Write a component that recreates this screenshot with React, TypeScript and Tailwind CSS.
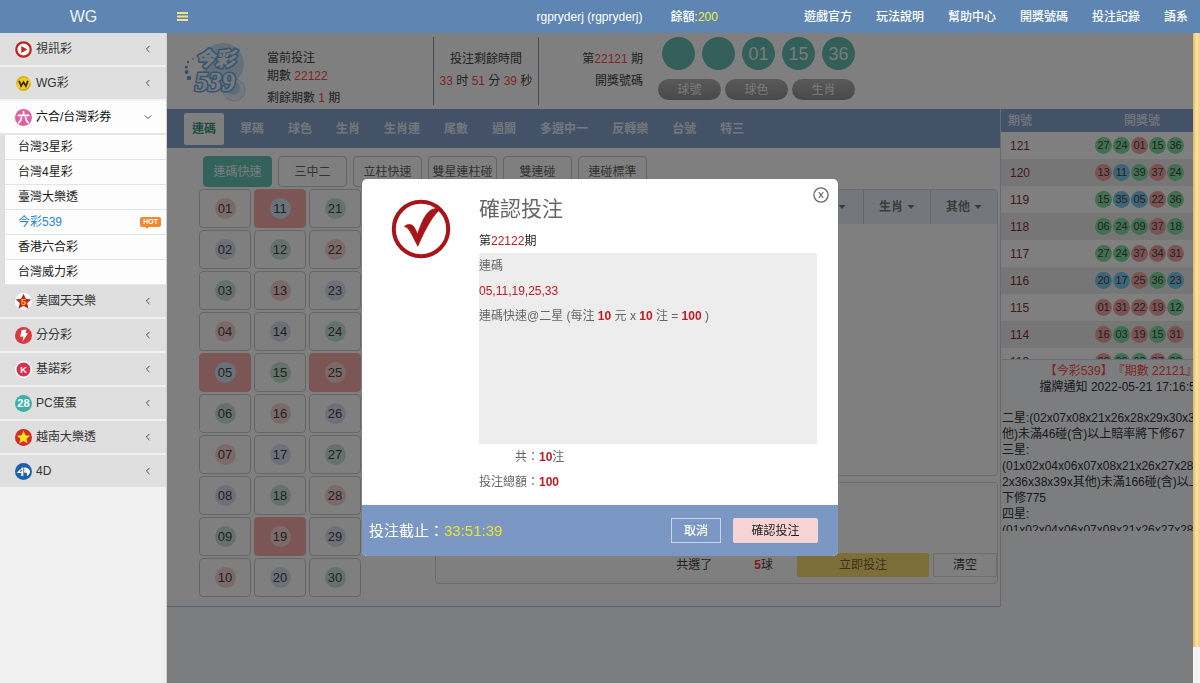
import React from "react";

type Tone = "red" | "blue" | "green";

const toneOf = (value: string): Tone => {
  const rest = Number(value) % 3;
  return rest === 1 ? "red" : rest === 2 ? "blue" : "green";
};

const pad = (n: number) => String(n).padStart(2, "0");

const topLinks = ["遊戲官方", "玩法說明", "幫助中心", "開獎號碼", "投注記錄", "語系"];
const playTabs = ["連碼", "單碼", "球色", "生肖", "生肖連", "尾數", "過關", "多選中一", "反轉樂", "台號", "特三"];
const modes = ["連碼快速", "三中二", "立柱快速", "雙星連柱碰", "雙連碰", "連碰標準"];
const picked = ["05", "11", "19", "25"];

const results: { id: string; balls: string[] }[] = [
  { id: "121", balls: ["27", "24", "01", "15", "36"] },
  { id: "120", balls: ["13", "11", "39", "37", "24"] },
  { id: "119", balls: ["15", "35", "05", "22", "36"] },
  { id: "118", balls: ["06", "24", "09", "37", "18"] },
  { id: "117", balls: ["27", "24", "37", "34", "31"] },
  { id: "116", balls: ["20", "17", "25", "36", "23"] },
  { id: "115", balls: ["01", "31", "22", "19", "12"] },
  { id: "114", balls: ["16", "03", "19", "15", "31"] },
  { id: "113", balls: ["22", "09", "03", "37", "33"] },
];

const notice = [
  "二星:(02x07x08x21x26x28x29x30x32",
  "他)未滿46碰(含)以上賠率將下修67",
  "三星:",
  "(01x02x04x06x07x08x21x26x27x28x",
  "2x36x38x39x其他)未滿166碰(含)以上",
  "下修775",
  "四星:",
  "(01x02x04x06x07x08x21x26x27x28x",
];

const svgText = "'Liberation Sans', sans-serif";
const starPoints = "10,2.2 12.3,7.4 17.8,7.9 13.6,11.6 14.9,17.1 10,14.2 5.1,17.1 6.4,11.6 2.2,7.9 7.7,7.4";

function Icon({ children }: { children: React.ReactNode }) {
  return (
    <svg viewBox="0 0 20 20" className="size-[17px] shrink-0" aria-hidden="true">
      {children}
    </svg>
  );
}

const VideoIcon = () => (
  <Icon>
    <circle cx="10" cy="10" r="8.5" fill="#fff" stroke="#c9201f" strokeWidth="2.6" />
    <path d="M7.4 5.8 L14.4 10 L7.4 14.2 Z" fill="#c9201f" />
  </Icon>
);
const WgIcon = () => (
  <Icon>
    <circle cx="10" cy="10" r="9" fill="#efcb30" />
    <circle cx="10" cy="10" r="7.6" fill="none" stroke="#a98a1c" strokeWidth="0.8" strokeDasharray="17 6" />
    <path d="M4.8 6.8 L7.2 13 L10 8.4 L12.8 13 L15.2 6.8" fill="none" stroke="#3a2d05" strokeWidth="2.1" />
  </Icon>
);
const SixIcon = () => (
  <Icon>
    <circle cx="10" cy="10" r="10" fill="#e0609f" />
    <path
      d="M10 3.2 V6.6 M4 7.6 H16 M7.6 9.8 C7.3 12.6 6.4 14.4 4.6 16 M12.4 9.8 C12.7 12.6 13.6 14.4 15.4 16"
      fill="none"
      stroke="#fff"
      strokeWidth="2.1"
      strokeLinecap="round"
    />
  </Icon>
);
const UsIcon = () => (
  <Icon>
    <circle cx="10" cy="10" r="10" fill="#fff" />
    <polygon points="10,0.8 12.8,6.9 19.2,7.5 14.4,11.9 15.8,18.4 10,15 4.2,18.4 5.6,11.9 0.8,7.5 7.2,6.9" fill="#cf1f22" />
    <text x="10" y="14.4" textAnchor="middle" fontSize="11.5" fontWeight="700" fill="#f6c51c" fontFamily={svgText}>5</text>
  </Icon>
);
const BoltIcon = () => (
  <Icon>
    <circle cx="10" cy="10" r="10" fill="#d83a41" />
    <path d="M8 3.4 L13.6 2.8 L12.2 7.2 L15.2 7.4 L8.8 17.4 L9.8 11.2 L6 11.4 Z" fill="#fff" />
  </Icon>
);
const KenoIcon = () => (
  <Icon>
    <circle cx="10" cy="10" r="10" fill="#fff" />
    <circle cx="10" cy="10" r="8.2" fill="#d93050" />
    <text x="10.2" y="14" textAnchor="middle" fontSize="11" fontWeight="700" fill="#fff" fontFamily={svgText}>K</text>
  </Icon>
);
const EggIcon = () => (
  <Icon>
    <circle cx="10" cy="10" r="10" fill="#3fb0a5" />
    <text x="10" y="14.4" textAnchor="middle" fontSize="13" fontWeight="700" fill="#fff" fontFamily={svgText}>28</text>
  </Icon>
);
const VietnamIcon = () => (
  <Icon>
    <circle cx="10" cy="10" r="10" fill="#d52b27" />
    <polygon points={starPoints} fill="#fbe416" />
  </Icon>
);
const FourDIcon = () => (
  <Icon>
    <circle cx="10" cy="10" r="10" fill="#1f5fb0" />
    <path d="M2.6 11 L9.8 4.4 V15.4 H7.4 V11.8 H2.6 Z" fill="#fff" />
    <path d="M10.8 5.4 C15 5.4 17.6 7.8 17.6 10.2 C17.6 12.8 15.6 14.6 14 15.2 V11.6 H10.8 Z" fill="#fff" />
    <path d="M5.4 9.9 L7.8 7.6 V9.9 Z" fill="#222" />
  </Icon>
);

function Chevron({ open }: { open?: boolean }) {
  return (
    <svg viewBox="0 0 10 10" className="size-2" aria-hidden="true">
      <path d={open ? "M1 3 L5 7 L9 3" : "M6.8 1.2 L3 5 L6.8 8.8"} fill="none" stroke="#444" strokeWidth="1.2" />
    </svg>
  );
}

function MenuItem({ icon, label, open }: { icon: React.ReactNode; label: string; open?: boolean }) {
  return (
    <button
      type="button"
      aria-expanded={!!open}
      className={`flex h-[34px] w-full items-center border-b-2 pl-[15px] pr-[14px] text-left ${
        open ? "border-[#e6e6e6] bg-[#fdfdfd] text-[#111]" : "border-[#f1f1f1] bg-[#dfdfdf] text-[#333]"
      }`}
    >
      {icon}
      <span className="ml-1 flex-1">{label}</span>
      <Chevron open={open} />
    </button>
  );
}

const subItems = ["台灣3星彩", "台灣4星彩", "臺灣大樂透", "今彩539", "香港六合彩", "台灣威力彩"];

function Sidebar() {
  return (
    <nav className="w-[167px] shrink-0 border-r border-[#cfd3d8] bg-[#f0f0f1]">
      <MenuItem icon={<VideoIcon />} label="視訊彩" />
      <MenuItem icon={<WgIcon />} label="WG彩" />
      <MenuItem icon={<SixIcon />} label="六合/台灣彩券" open />
      <ul className="border-l-[5px] border-[#dfdfdf] bg-[#fdfdfd]">
        {subItems.map((item) => (
          <li key={item} className="border-b border-[#e4e4e4]">
            <a
              href="#"
              className={`flex h-6 items-center justify-between pl-[13px] pr-[5px] ${
                item === "今彩539" ? "text-[#1c86e0]" : "text-[#222]"
              }`}
            >
              {item}
              {item === "今彩539" && (
                <span className="relative h-[10px] rounded-[2px] bg-[#f5872f] px-[3px] text-[7px] leading-[10px] font-bold text-white after:absolute after:-bottom-px after:left-[5px] after:size-1 after:rotate-45 after:bg-[#f5872f]">
                  HOT
                </span>
              )}
            </a>
          </li>
        ))}
      </ul>
      <MenuItem icon={<UsIcon />} label="美國天天樂" />
      <MenuItem icon={<BoltIcon />} label="分分彩" />
      <MenuItem icon={<KenoIcon />} label="基諾彩" />
      <MenuItem icon={<EggIcon />} label="PC蛋蛋" />
      <MenuItem icon={<VietnamIcon />} label="越南大樂透" />
      <MenuItem icon={<FourDIcon />} label="4D" />
    </nav>
  );
}

function Header() {
  return (
    <header className="flex h-[33px] items-center bg-[#5f86b3] text-white">
      <div className="w-[167px] text-center text-base text-[#eef3f9]">WG</div>
      <button type="button" aria-label="選單" className="ml-[10px]">
        <svg viewBox="0 0 11 9" className="h-[9px] w-[11px]" aria-hidden="true">
          <path d="M0 1 H11 M0 4.5 H11 M0 8 H11" stroke="#f3e281" strokeWidth="1.9" />
        </svg>
      </button>
      <div className="flex flex-1 items-center justify-end gap-6 pr-3 font-medium">
        <span className="mr-1">rgpryderj (rgpryderj)</span>
        <span className="mr-[62px]">
          餘額:<span className="text-[#eef13a]">200</span>
        </span>
        {topLinks.map((label) => (
          <a key={label} href="#">
            {label}
          </a>
        ))}
      </div>
    </header>
  );
}

function Logo() {
  const style = {
    fontFamily: "'Noto Sans CJK TC', sans-serif",
    fontWeight: 900,
    fontStyle: "italic",
    paintOrder: "stroke",
  } as const;
  return (
    <svg viewBox="0 0 62 62" className="size-[62px] shrink-0" role="img" aria-label="今彩539">
      <circle cx="39" cy="22" r="21" fill="#cbe1f4" />
      <circle cx="50" cy="48" r="11" fill="#eaf3fb" stroke="#c2dbf0" />
      <circle cx="49" cy="46" r="7" fill="#bcd9f2" />
      <circle cx="9" cy="17" r="0.9" fill="#d69ab0" />
      <circle cx="4" cy="20" r="1.2" fill="#6aa6dc" />
      <circle cx="2.4" cy="25" r="1.5" fill="#5f9fda" />
      <circle cx="2.6" cy="30" r="1.9" fill="#5f9fda" />
      <circle cx="5" cy="36" r="2.2" fill="#5f9fda" />
      <text x="31" y="24" textAnchor="middle" fontSize="20" fill="#eef4fb" stroke="#6fabe2" strokeWidth="3.2" strokeLinejoin="round" style={style}>今彩</text>
      <text
        x="31"
        y="49"
        textAnchor="middle"
        fontSize="27"
        fill="#eef4fb"
        stroke="#6fabe2"
        strokeWidth="3.2"
        strokeLinejoin="round"
        style={{ ...style, fontFamily: "'Liberation Serif', serif" }}
      >
        539
      </text>
    </svg>
  );
}

const Red = ({ children }: { children: React.ReactNode }) => <span className="text-[#ff4a4a]">{children}</span>;

function InfoBar() {
  return (
    <section className="flex h-[76px] pl-[17px]">
      <div className="pt-[9px]">
        <Logo />
      </div>
      <div className="ml-[21px] w-[166px] pt-4 leading-[18px]">
        <p>當前投注</p>
        <p>
          期數 <Red>22122</Red>
        </p>
        <p className="mt-1">
          剩餘期數 <Red>1</Red> 期
        </p>
      </div>
      <div className="mt-1 h-[68px] w-[106px] border-x border-[#99a] pt-[11px] text-center leading-[22px]">
        <p>投注剩餘時間</p>
        <p>
          <Red>33</Red> 时 <Red>51</Red> 分 <Red>39</Red> 秒
        </p>
      </div>
      <div className="w-[104px] pt-[15px] text-right leading-[22px]">
        <p>
          第<Red>22121</Red> 期
        </p>
        <p>開獎號碼</p>
      </div>
      <div className="ml-[15px] flex flex-col items-end pt-1">
        <div className="flex gap-[7px]">
          {["", "", "01", "15", "36"].map((n, i) => (
            <span key={i} className="flex size-[33px] items-center justify-center rounded-full bg-[#66bdb2] text-lg leading-none text-[#e8f8f5]">
              {n}
            </span>
          ))}
        </div>
        <div className="mt-[9px] flex gap-1">
          {["球號", "球色", "生肖"].map((n) => (
            <button key={n} type="button" className="h-[21px] w-[63px] rounded-full bg-linear-to-b from-[#b4b4b4] to-[#929292] text-[#f2f2f2]">
              {n}
            </button>
          ))}
        </div>
      </div>
    </section>
  );
}

const cellTone: Record<Tone, string> = {
  red: "bg-[#f9d3d3]",
  blue: "bg-[#dbe1f0]",
  green: "bg-[#cbe3d7]",
};

function NumberGrid() {
  const cells: string[] = [];
  for (let row = 1; row <= 10; row++) {
    for (let col = 0; col < 3; col++) cells.push(pad(row + col * 10));
  }
  return (
    <div className="grid w-[162px] grid-cols-3 gap-x-[3px] gap-y-[2px]">
      {cells.map((n) => {
        const on = picked.includes(n);
        return (
          <button
            key={n}
            type="button"
            aria-pressed={on}
            className={`flex h-[39px] items-center justify-center rounded-sm border text-[13px] ${
              on ? "border-[#f9aaaa] bg-[#f9aaaa]" : "border-[#cdcdcd] bg-white"
            }`}
          >
            <span className={`flex size-[21px] items-center justify-center rounded-full ${on ? (toneOf(n) === "blue" ? "bg-[#d3e3f5]" : "bg-[#f9d3d3]") : cellTone[toneOf(n)]}`}>
              {n}
            </span>
          </button>
        );
      })}
    </div>
  );
}

function Caret() {
  return (
    <svg viewBox="0 0 8 4" className="h-1 w-2" aria-hidden="true">
      <path d="M0.5 0 H7.5 L4 4 Z" fill="#777" />
    </svg>
  );
}

function BetPanel() {
  return (
    <div className="flex flex-1 flex-col gap-[6px]">
      <div className="h-[287px] rounded-sm border border-[#dcdcdc]">
        <div className="flex h-[34px] justify-end bg-[#e9effa] text-[#777]">
          <button type="button" aria-label="更多" className="w-[67px] pl-[42px]">
            <Caret />
          </button>
          {["生肖", "其他"].map((label) => (
            <button key={label} type="button" className="flex w-[67px] items-center justify-center gap-1 border-l border-[#c9ced8] font-bold">
              {label}
              <Caret />
            </button>
          ))}
        </div>
      </div>
      <div className="flex h-[102px] items-end rounded-sm border border-[#dcdcdc] pb-[6px]">
        <div className="flex flex-1 items-center justify-end gap-1">
          <span>共選了</span>
          <span className="ml-[38px] mr-5">
            <b className="text-[#ff3a3a]">5</b>球
          </span>
          <button type="button" className="h-6 w-[132px] rounded-xs bg-[#fbdc72] text-[#776633]">
            立即投注
          </button>
          <button type="button" className="h-6 w-[64px] rounded-xs border border-[#dcdcdc]">
            清空
          </button>
        </div>
      </div>
    </div>
  );
}

const resultTone: Record<Tone, string> = {
  red: "bg-[#f7a5a5]",
  blue: "bg-[#7cc8ee]",
  green: "bg-[#82dfa0]",
};

function ResultsPanel() {
  return (
    <aside className="w-[193px] shrink-0 border-l border-[#c8d6e8]">
      <div className="h-[250px] overflow-hidden bg-white">
        <table className="w-full border-collapse">
          <thead>
            <tr className="h-[23px] bg-[#88a5cf] text-left text-[#e8eef8]">
              <th className="pl-[7px] font-medium">期號</th>
              <th className="w-[111px] pl-[42px] font-medium">開獎號</th>
            </tr>
          </thead>
          <tbody>
            {results.map((row, i) => (
              <tr key={row.id} className={`h-[27px] ${i % 2 ? "bg-[#ececec]" : "bg-white"}`}>
                <td className="pl-[9px] text-[#8a3040]">{row.id}</td>
                <td className="pl-[13px]">
                  <div className="flex gap-px">
                    {row.balls.map((b, j) => (
                      <span key={j} className={`flex size-[17px] items-center justify-center rounded-full text-[11px] ${resultTone[toneOf(b)]}`}>
                        {b}
                      </span>
                    ))}
                  </div>
                </td>
              </tr>
            ))}
          </tbody>
        </table>
      </div>
      <div className="h-[172px] overflow-hidden border-t border-[#d5dde8] pt-[3px] leading-4 whitespace-nowrap text-[#333]">
        <div className="w-[240px] text-center">
          <p className="text-[#ff4a4a] [text-spacing-trim:space-all]">【今彩539】『期數 22121』</p>
          <p>擋牌通知 2022-05-21 17:16:58</p>
        </div>
        <div className="pl-px pt-[15px]">
          {notice.map((line, i) => (
            <p key={i}>{line}</p>
          ))}
        </div>
      </div>
    </aside>
  );
}

function BetPage() {
  return (
    <main className="relative flex min-w-0 flex-1 flex-col overflow-hidden bg-[#f8fbff] text-[#444]">
      <div className="bg-white">
        <InfoBar />
      </div>
      <div className="flex">
        <section className="flex-1 border-b border-[#a9c4ea] bg-white">
          <div className="flex h-[39px] items-center gap-2 bg-[#88a5cf] pl-[17px]">
            {playTabs.map((tab, i) => (
              <button
                key={tab}
                type="button"
                className={`h-8 rounded-xs px-2 font-bold ${i === 0 ? "bg-white text-[#3e9a86]" : "text-[#e6ecf6]"}`}
              >
                {tab}
              </button>
            ))}
          </div>
          <div className="flex gap-[6px] pl-9 pt-2">
            {modes.map((mode, i) => (
              <button
                key={mode}
                type="button"
                className={`h-[31px] w-[69px] rounded-sm border ${
                  i === 0 ? "border-[#66c4b8] bg-[#66c4b8] text-[#eefaf8]" : "border-[#c4c8cd] text-[#666]"
                }`}
              >
                {mode}
              </button>
            ))}
          </div>
          <div className="flex gap-[74px] pb-[9px] pl-8 pr-[2px] pt-[2px]">
            <NumberGrid />
            <BetPanel />
          </div>
        </section>
        <ResultsPanel />
      </div>
      <div className="absolute inset-0 bg-black/50" />
    </main>
  );
}

const Strong = ({ children }: { children: React.ReactNode }) => <b className="text-[#c01a22]">{children}</b>;

function ConfirmDialog() {
  return (
    <div className="fixed inset-0 flex items-start justify-center pt-[179px]">
      <div role="dialog" aria-modal="true" aria-labelledby="confirm-title" className="w-[476px] overflow-hidden rounded-[5px] bg-white text-[#666]">
        <div className="flex px-[21px] pb-[10px]">
          <svg viewBox="0 0 60 60" className="ml-2 mt-5 size-[60px] shrink-0" aria-hidden="true">
            <circle cx="30" cy="30" r="27.2" fill="none" stroke="#a81418" strokeWidth="4" />
            <path
              d="M13.5 27.8 C15 25.4 19.6 24.6 22 27 C24 29 25.6 32.6 26.4 35.6 C29.6 26 33 17 38 12.5 C42 9.2 47 9 49.4 10.2 C43 15 35.5 27 26.8 47.2 C23.2 40 19.5 32.4 17.2 29.8 C16 28.4 14.8 27.8 13.5 27.8 Z"
              fill="#a81418"
              stroke="#a81418"
              strokeWidth="0.8"
              strokeLinejoin="round"
            />
          </svg>
          <div className="ml-7 flex-1">
            <h2 id="confirm-title" className="mt-[15px] text-[21px] leading-[30px]">
              確認投注
            </h2>
            <p className="mt-[6px] leading-[22px] text-[#222]">
              第<span className="text-[#c01a22]">22122</span>期
            </p>
            <div className="mt-px h-[191px] bg-[#ededed] pt-px leading-[25px]">
              <p>連碼</p>
              <p className="text-[#c01a22]">05,11,19,25,33</p>
              <p>
                連碼快速@二星 (每注 <Strong>10</Strong> 元 x <Strong>10</Strong> 注 = <Strong>100</Strong> )
              </p>
            </div>
            <dl className="grid grid-cols-[60px_1fr] pt-px leading-[25px]">
              <dt className="text-right">共：</dt>
              <dd>
                <Strong>10</Strong>注
              </dd>
              <dt className="text-right">投注總額：</dt>
              <dd>
                <Strong>100</Strong>
              </dd>
            </dl>
          </div>
          <button type="button" aria-label="關閉" className="-ml-1 -mr-3 mt-2 size-4 shrink-0">
            <svg viewBox="0 0 16 16" className="size-4" aria-hidden="true">
              <circle cx="8" cy="8" r="7.1" fill="none" stroke="#666" strokeWidth="1.3" />
              <path d="M5.8 5.2 L10.2 10.8 M10.2 5.2 L5.8 10.8" stroke="#666" strokeWidth="1.1" />
            </svg>
          </button>
        </div>
        <div className="flex h-[51px] items-center bg-[#7b98c4] pl-[7px] pr-5 text-white">
          <p className="flex-1 text-[15px]">
            投注截止：<span className="text-[#ece332]">33:51:39</span>
          </p>
          <button type="button" className="h-[25px] w-[50px] border border-[#c9d6ea] font-medium">
            取消
          </button>
          <button type="button" className="ml-3 h-[25px] w-[85px] rounded-xs bg-[#f7d4d4] text-[#222]">
            確認投注
          </button>
        </div>
      </div>
    </div>
  );
}

export default function App() {
  return (
    <div className="flex min-h-screen flex-col bg-white font-['Liberation_Sans','Noto_Sans_CJK_TC',sans-serif] text-xs">
      <Header />
      <div className="flex flex-1">
        <Sidebar />
        <BetPage />
        <div className="w-[7px] shrink-0 bg-[#f3f3f3] pb-9">
          <div className="h-full bg-linear-to-r from-[#e0b96a] via-[#fde3a2] to-[#f3cf86]" />
        </div>
      </div>
      <ConfirmDialog />
    </div>
  );
}
